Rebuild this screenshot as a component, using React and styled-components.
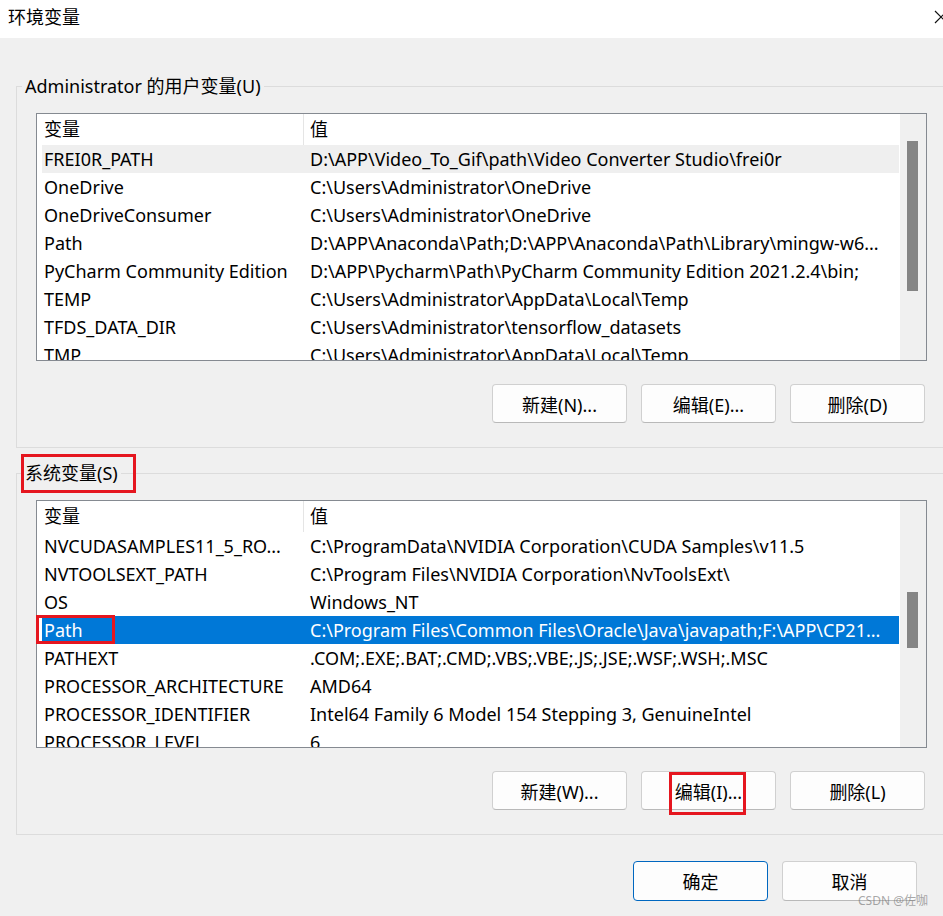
import React from "react";
import styled, { createGlobalStyle } from "styled-components";

const GlobalStyle = createGlobalStyle`
  html, body { margin: 0; padding: 0; background: #f0f0f0; }
  body { font-family: "Noto Sans", "Noto Sans CJK SC", sans-serif; }
  *, *::before, *::after { box-sizing: border-box; }
`;

const Window = styled.div`
  position: relative;
  width: 943px;
  height: 916px;
  overflow: hidden;
  background: #f0f0f0;
  color: #000;
  font-size: 18px;
`;

const TitleBar = styled.div`
  height: 38px;
  background: #fff;
  display: flex;
  align-items: center;
  justify-content: space-between;
  padding-left: 8px;
`;

const Title = styled.span`
  font-size: 18px;
  line-height: 22px;
  margin-top: -4px;
`;

const CloseIcon = styled.svg`
  flex: none;
  margin-right: -6px;
  margin-top: -4px;
`;

const Body = styled.div`
  padding-top: 37px;
`;

const Group = styled.fieldset`
  margin: ${(p) => p.$top}px 0 0 16px;
  width: 960px;
  min-inline-size: 0;
  padding: 16px 0 24px 0;
  border: 1px solid #dcdcdc;
`;

const Legend = styled.legend`
  position: relative;
  margin-left: 5px;
  padding: 0 3px;
  font-size: 18px;
  line-height: 22px;
`;

const Inner = styled.div`
  margin-left: 19px;
  width: 891px;
  display: flex;
  flex-direction: column;
  gap: 23px;
`;

const ListBox = styled.div`
  display: flex;
  width: 891px;
  height: 248px;
  border: 1px solid #858a91;
  background: #fff;
`;

const ListMain = styled.div`
  flex: 0 0 863px;
  padding: 0 1px 0 5px;
  overflow-x: visible;
  overflow-y: clip;
  display: flex;
  flex-direction: column;
`;

const HeaderRow = styled.div`
  display: flex;
  flex: none;
  height: 31px;
  line-height: 31px;
`;

const HeaderCell = styled.div`
  ${(p) =>
    p.$first
      ? `flex: 0 0 262px; padding-left: 2px; border-right: 1px solid #e5e5e5;`
      : `flex: 1; padding-left: 6px;`}
`;

const Row = styled.div`
  position: relative;
  display: flex;
  flex: none;
  height: 28px;
  line-height: 28px;
  white-space: nowrap;
  background: ${(p) => (p.$selected ? "#0078d7" : p.$hover ? "#efefef" : "transparent")};
  color: ${(p) => (p.$selected ? "#fff" : "#000")};
`;

const Cell = styled.div`
  overflow: hidden;
  ${(p) => (p.$first ? `flex: 0 0 262px; padding-left: 2px;` : `flex: 1; padding-left: 6px;`)}
`;

const Track = styled.div`
  flex: 0 0 26px;
  background: #f0f0f0;
  padding-left: 7px;
`;

const Thumb = styled.div`
  width: 11px;
  margin-top: ${(p) => p.$top}px;
  height: ${(p) => p.$h}px;
  background: #858585;
`;

const ButtonRow = styled.div`
  display: flex;
  justify-content: flex-end;
  gap: 14px;
  padding-right: 2px;
`;

const Button = styled.button`
  position: relative;
  width: 135px;
  height: ${(p) => (p.$tall ? 40 : 39)}px;
  padding: 0;
  background: #fdfdfd;
  border: 1px solid ${(p) => (p.$primary ? "#0067c0" : "#d0d0d0")};
  border-bottom-color: ${(p) => (p.$primary ? "#0067c0" : "#b9b9b9")};
  border-radius: 4px;
  font-family: inherit;
  font-size: 18px;
  color: #000;
`;

const Footer = styled.div`
  display: flex;
  justify-content: flex-end;
  gap: 14px;
  margin-top: 26px;
  padding-right: 26px;
`;

const Mark = styled.span`
  position: absolute;
  left: ${(p) => p.$l}px;
  top: ${(p) => p.$t}px;
  width: ${(p) => p.$w}px;
  height: ${(p) => p.$h}px;
  border: 3px solid #e5161f;
  pointer-events: none;
`;

const Watermark = styled.div`
  position: absolute;
  right: 15px;
  bottom: 8px;
  font-size: 12px;
  line-height: 14px;
  color: rgba(110, 110, 110, 0.6);
  font-family: "Noto Sans", "Noto Sans CJK SC", sans-serif;
`;

const userVars = [
  ["FREI0R_PATH", "D:\\APP\\Video_To_Gif\\path\\Video Converter Studio\\frei0r"],
  ["OneDrive", "C:\\Users\\Administrator\\OneDrive"],
  ["OneDriveConsumer", "C:\\Users\\Administrator\\OneDrive"],
  ["Path", "D:\\APP\\Anaconda\\Path;D:\\APP\\Anaconda\\Path\\Library\\mingw-w6..."],
  ["PyCharm Community Edition", "D:\\APP\\Pycharm\\Path\\PyCharm Community Edition 2021.2.4\\bin;"],
  ["TEMP", "C:\\Users\\Administrator\\AppData\\Local\\Temp"],
  ["TFDS_DATA_DIR", "C:\\Users\\Administrator\\tensorflow_datasets"],
  ["TMP", "C:\\Users\\Administrator\\AppData\\Local\\Temp"],
];

const sysVars = [
  ["NVCUDASAMPLES11_5_RO...", "C:\\ProgramData\\NVIDIA Corporation\\CUDA Samples\\v11.5"],
  ["NVTOOLSEXT_PATH", "C:\\Program Files\\NVIDIA Corporation\\NvToolsExt\\"],
  ["OS", "Windows_NT"],
  ["Path", "C:\\Program Files\\Common Files\\Oracle\\Java\\javapath;F:\\APP\\CP21..."],
  ["PATHEXT", ".COM;.EXE;.BAT;.CMD;.VBS;.VBE;.JS;.JSE;.WSF;.WSH;.MSC"],
  ["PROCESSOR_ARCHITECTURE", "AMD64"],
  ["PROCESSOR_IDENTIFIER", "Intel64 Family 6 Model 154 Stepping 3, GenuineIntel"],
  ["PROCESSOR_LEVEL", "6"],
];

function VarList({ rows, thumbTop, thumbH, hover, selected, markSelected }) {
  return (
    <ListBox>
      <ListMain>
        <HeaderRow>
          <HeaderCell $first>变量</HeaderCell>
          <HeaderCell>值</HeaderCell>
        </HeaderRow>
        {rows.map(([k, v], i) => (
          <Row key={k + i} $hover={i === hover} $selected={i === selected}>
            <Cell $first>{k}</Cell>
            <Cell>{v}</Cell>
            {markSelected && i === selected && <Mark $l={-6} $t={-1} $w={79} $h={29} />}
          </Row>
        ))}
      </ListMain>
      <Track>
        <Thumb $top={thumbTop} $h={thumbH} />
      </Track>
    </ListBox>
  );
}

export default function App() {
  return (
    <Window>
      <GlobalStyle />
      <TitleBar>
        <Title>环境变量</Title>
        <CloseIcon width="16" height="16" viewBox="0 0 16 16">
          <path d="M2 2 L14 14 M14 2 L2 14" stroke="#111" strokeWidth="1.2" fill="none" />
        </CloseIcon>
      </TitleBar>
      <Body>
        <Group $top={0}>
          <Legend>Administrator 的用户变量(U)</Legend>
          <Inner>
            <VarList rows={userVars} thumbTop={27} thumbH={150} hover={0} />
            <ButtonRow>
              <Button>新建(N)...</Button>
              <Button>编辑(E)...</Button>
              <Button>删除(D)</Button>
            </ButtonRow>
          </Inner>
        </Group>
        <Group $top={14}>
          <Legend>
            系统变量(S)
            <Mark $l={-1} $t={-8} $w={115} $h={39} />
          </Legend>
          <Inner>
            <VarList rows={sysVars} thumbTop={91} thumbH={56} selected={3} markSelected />
            <ButtonRow>
              <Button>新建(W)...</Button>
              <Button>
                编辑(I)...
                <Mark $l={27} $t={0} $w={77} $h={43} />
              </Button>
              <Button>删除(L)</Button>
            </ButtonRow>
          </Inner>
        </Group>
        <Footer>
          <Button $tall $primary>确定</Button>
          <Button $tall>取消</Button>
        </Footer>
      </Body>
      <Watermark>CSDN @佐咖</Watermark>
    </Window>
  );
}
